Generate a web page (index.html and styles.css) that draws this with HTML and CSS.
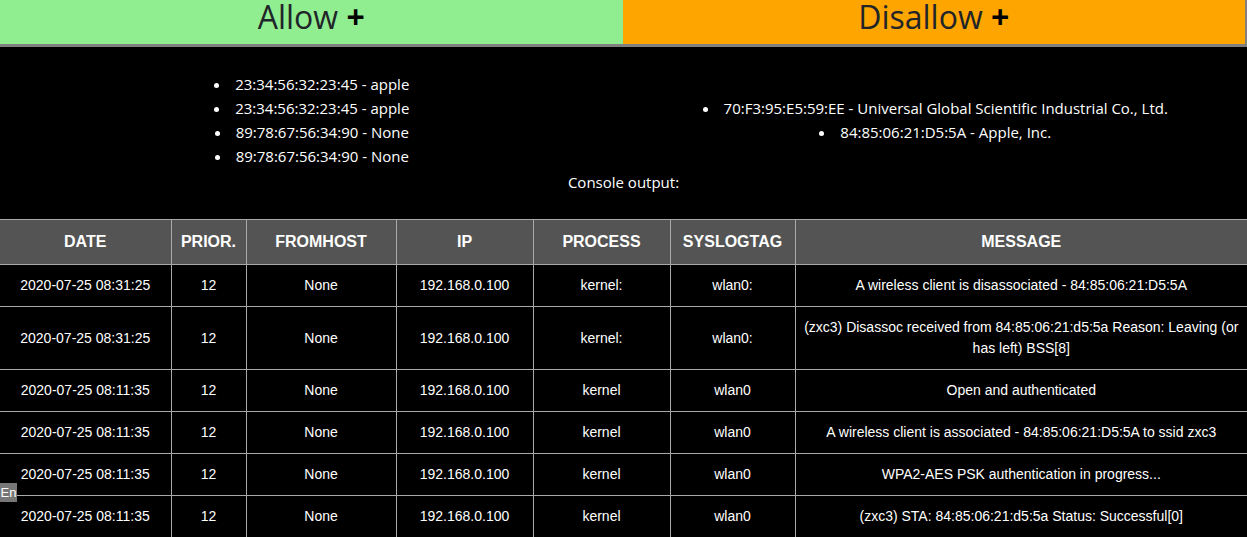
FILE: index.html
```html
<!DOCTYPE html>
<html>
<head>
<meta charset="utf-8">
<link rel="stylesheet" href="styles.css">
</head>
<body>
<div class="actions">
  <button class="btn allow">Allow <span class="plus">+</span></button>
  <button class="btn disallow">Disallow <span class="plus">+</span></button>
</div>
<div class="lists">
  <div class="col">
    <ul class="macs">
      <li>23:34:56:32:23:45 - apple</li>
      <li>23:34:56:32:23:45 - apple</li>
      <li>89:78:67:56:34:90 - None</li>
      <li>89:78:67:56:34:90 - None</li>
    </ul>
  </div>
  <div class="col">
    <ul class="macs">
      <li>70:F3:95:E5:59:EE - Universal Global Scientific Industrial Co., Ltd.</li>
      <li>84:85:06:21:D5:5A - Apple, Inc.</li>
    </ul>
  </div>
</div>
<p class="console">Console output:</p>
<table class="log">
  <colgroup>
    <col class="c-date"><col class="c-prior"><col class="c-host"><col class="c-ip"><col class="c-proc"><col class="c-tag"><col class="c-msg">
  </colgroup>
  <thead>
    <tr><th>DATE</th><th>PRIOR.</th><th>FROMHOST</th><th>IP</th><th>PROCESS</th><th>SYSLOGTAG</th><th>MESSAGE</th></tr>
  </thead>
  <tbody>
    <tr><td>2020-07-25 08:31:25</td><td>12</td><td>None</td><td>192.168.0.100</td><td>kernel:</td><td>wlan0:</td><td>A wireless client is disassociated - 84:85:06:21:D5:5A</td></tr>
    <tr><td>2020-07-25 08:31:25</td><td>12</td><td>None</td><td>192.168.0.100</td><td>kernel:</td><td>wlan0:</td><td>(zxc3) Disassoc received from 84:85:06:21:d5:5a Reason: Leaving (or has left) BSS[8]</td></tr>
    <tr><td>2020-07-25 08:11:35</td><td>12</td><td>None</td><td>192.168.0.100</td><td>kernel</td><td>wlan0</td><td>Open and authenticated</td></tr>
    <tr><td>2020-07-25 08:11:35</td><td>12</td><td>None</td><td>192.168.0.100</td><td>kernel</td><td>wlan0</td><td>A wireless client is associated - 84:85:06:21:D5:5A to ssid zxc3</td></tr>
    <tr><td>2020-07-25 08:11:35</td><td>12</td><td>None</td><td>192.168.0.100</td><td>kernel</td><td>wlan0</td><td>WPA2-AES PSK authentication in progress...</td></tr>
    <tr><td>2020-07-25 08:11:35</td><td>12</td><td>None</td><td>192.168.0.100</td><td>kernel</td><td>wlan0</td><td>(zxc3) STA: 84:85:06:21:d5:5a Status: Successful[0]</td></tr>
  </tbody>
</table>
<div class="lang">En</div>
</body>
</html>
```

FILE: styles.css
```css
html, body {
  margin: 0;
  padding: 0;
  background: #000;
}
body {
  font-family: "Open Sans", "Noto Sans", sans-serif;
  color: #fff;
}
.actions {
  display: flex;
}
.btn {
  flex: 1;
  height: 47px;
  margin: 0;
  padding: 0 0 10px;
  border: none;
  border-bottom: 3px solid #808080;
  font-family: "Open Sans", "Noto Sans", sans-serif;
  font-size: 32px;
  line-height: 34px;
  color: #212529;
}
.allow {
  background: #90ee90;
}
.disallow {
  background: #ffa500;
  border-right: 2px solid #808080;
}
.plus {
  color: #000;
  font-weight: 700;
}
.lists {
  display: flex;
  align-items: center;
  margin-top: 25px;
}
.col {
  flex: 1;
}
.macs {
  margin: 0;
  padding: 0 40px;
  text-align: center;
  list-style-position: inside;
  font-size: 15px;
  line-height: 24px;
}
.console {
  margin: 2px 0 25px;
  text-align: center;
  font-size: 15px;
  line-height: 24px;
}
.log {
  width: 100%;
  border-collapse: collapse;
  table-layout: fixed;
  font-family: "Liberation Sans", Arial, sans-serif;
  color: #fff;
}
.c-date { width: 171px; }
.c-prior { width: 75px; }
.c-host { width: 150px; }
.c-ip { width: 137px; }
.c-proc { width: 137px; }
.c-tag { width: 125px; }
.log th, .log td {
  border: 1px solid #a9a9a9;
  padding: 10px 5px;
  text-align: center;
}
.log tr > :first-child { border-left: none; }
.log tr > :last-child { border-right: none; }
.log th {
  background: #545454;
  font-size: 16px;
  line-height: 24px;
  font-weight: bold;
}
.log td {
  font-size: 14px;
  line-height: 21px;
}
.lang {
  position: absolute;
  left: 0;
  top: 483px;
  width: 17px;
  height: 19px;
  background: #777;
  color: #fff;
  font-family: "Liberation Sans", Arial, sans-serif;
  font-size: 13px;
  line-height: 19px;
  text-align: center;
}
```
